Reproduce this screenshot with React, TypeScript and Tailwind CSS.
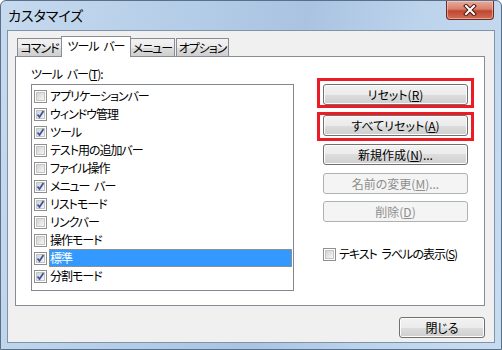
import type { ReactNode } from "react";

const font =
  "font-['Noto_Sans_CJK_JP','Liberation_Sans',sans-serif] [font-feature-settings:'palt'] [word-spacing:3px]";

const items = [
  { label: "アプリケーションバー", checked: false },
  { label: "ウィンドウ管理", checked: true },
  { label: "ツール", checked: true },
  { label: "テスト用の追加バー", checked: false },
  { label: "ファイル操作", checked: false },
  { label: "メニュー バー", checked: true },
  { label: "リストモード", checked: true },
  { label: "リンクバー", checked: false },
  { label: "操作モード", checked: false },
  { label: "標準", checked: true, selected: true },
  { label: "分割モード", checked: true },
];

const tabBg =
  "border border-b-0 border-[#898c95] bg-[linear-gradient(#f2f2f2_0%,#ebebeb_50%,#dddddd_50%,#cfcfcf_100%)]";

function CheckBox({ checked }: { checked: boolean }) {
  return (
    <span className="flex h-[13px] w-[13px] shrink-0 items-center justify-center border border-[#8e8f8f] bg-white p-px">
      <span className="relative flex h-full w-full items-center justify-center border border-[#c4c4c4] bg-[linear-gradient(135deg,#d3d3d3,#f6f6f6)]">
        {checked && (
          <svg width="9" height="9" viewBox="0 0 9 9" className="absolute -left-px -top-px">
            <path d="M1.5 4.5 L3.5 7 L7.5 1" fill="none" stroke="#3b58a0" strokeWidth="1.8" />
          </svg>
        )}
      </span>
    </span>
  );
}

function Button({
  children,
  disabled,
  className = "",
}: {
  children: ReactNode;
  disabled?: boolean;
  className?: string;
}) {
  return (
    <div
      className={`flex h-[21px] items-center justify-center whitespace-nowrap rounded-[3px] border text-[12px] ${
        disabled
          ? "border-[#adb2b5] bg-[#f4f4f4] text-[#8d8d8d]"
          : "border-[#707070] bg-[linear-gradient(#f2f2f2_0%,#ebebeb_50%,#dddddd_50%,#cfcfcf_100%)] text-black shadow-[inset_0_0_0_1px_#fcfcfc]"
      } ${className}`}
    >
      {children}
    </div>
  );
}

function RedBox({ children, top = 6, }: { children: ReactNode; top?: number }) {
  return (
    <div className="relative">
      <span
        className={`pointer-events-none absolute -left-[6px] -right-[6px] border-[3px] border-[#ed1c24] ${
          top === 6 ? "-top-[6px] -bottom-[3px]" : "-top-[3px] -bottom-[5px]"
        }`}
      />
      {children}
    </div>
  );
}

export default function App() {
  return (
    <div
      className={`flex h-[350px] w-[502px] flex-col overflow-hidden rounded-t-[6px] border border-[#5a6f88] bg-[linear-gradient(100deg,#c6daef_0%,#b3cce7_35%,#a9c3e1_55%,#bcd3ec_75%,#c8dcf0_100%)] text-black ${font}`}
    >
      <div className="flex h-[29px] shrink-0 items-start">
        <span className="pl-[7px] pt-[5px] text-[14px] leading-[18px] text-black">カスタマイズ</span>
        <div className="ml-auto mr-[7px] flex h-[19px] w-[48px] items-center justify-center rounded-b-[4px] border border-t-0 border-[#6d2c22] bg-[linear-gradient(#e8aa9d_0%,#d8806c_45%,#c0452f_55%,#cf6e58_100%)] shadow-[inset_0_0_0_1px_rgba(255,220,210,0.5)]">
          <svg width="14" height="12" viewBox="0 0 14 12">
            <path d="M3 2 L11 10 M11 2 L3 10" stroke="#4a1a12" strokeWidth="4" strokeLinecap="square" />
            <path d="M3 2 L11 10 M11 2 L3 10" stroke="#ffffff" strokeWidth="2" strokeLinecap="square" />
          </svg>
        </div>
      </div>

      <div className="mx-[6px] flex h-[313px] flex-col border border-[#8193a8] bg-[#f0f0f0] pl-[7px] pr-[9px]">
        <div className="mt-[5px] flex h-[20px] items-end whitespace-nowrap pl-[2px] text-[12px] tracking-[-1px]">
          <div className={`flex h-[18px] w-[45px] items-center justify-center ${tabBg}`}>コマンド</div>
          <div className="relative z-10 -mb-px -ml-px flex h-[21px] w-[70px] items-center justify-center border border-b-0 border-[#898c95] bg-white pb-[2px]">
            ツール バー
          </div>
          <div className={`-ml-px flex h-[18px] w-[45px] items-center justify-center ${tabBg}`}>メニュー</div>
          <div className={`ml-px flex h-[18px] w-[53px] items-center justify-center ${tabBg}`}>オプション</div>
        </div>

        <div className="flex h-[250px] border border-[#898c95] bg-white pl-[15px] pt-[8px] text-[12px]">
          <div className="flex flex-col">
            <div className="h-[19px] leading-[17px] tracking-[-1px]">
              ツール バー(<span className="underline">T</span>):
            </div>
            <div className="flex h-[207px] w-[263px] flex-col border border-[#828790] bg-white px-px pt-[2px] tracking-[-1px]">
              {items.map((it) => (
                <div key={it.label} className="flex h-[18px] items-center pl-px">
                  <CheckBox checked={it.checked} />
                  <span
                    className={`ml-[2px] flex h-[18px] items-center whitespace-pre ${
                      it.selected
                        ? "flex-1 border border-dotted border-[#d98a2b] bg-[#3399ff] text-white"
                        : "border border-transparent"
                    }`}
                  >
                    {it.label}
                  </span>
                </div>
              ))}
            </div>
          </div>

          <div className="ml-[29px] flex w-[145px] flex-col pt-[19px]">
            <RedBox>
              <Button>
                リセット(<span className="underline">R</span>)
              </Button>
            </RedBox>
            <div className="mt-[10px]">
              <RedBox top={3}>
                <Button>
                  すべてリセット(<span className="underline">A</span>)
                </Button>
              </RedBox>
            </div>
            <Button className="mt-[8px]">
              新規作成(<span className="underline">N</span>)...
            </Button>
            <Button disabled className="mt-[8px]">
              名前の変更(<span className="underline">M</span>)...
            </Button>
            <Button disabled className="mt-[7px]">
              削除(<span className="underline">D</span>)
            </Button>
            <div className="mt-[23px] flex items-center gap-[3px] whitespace-nowrap tracking-[-1px]">
              <CheckBox checked={false} />
              <span>
                テキスト ラベルの表示(<span className="underline">S</span>)
              </span>
            </div>
          </div>
        </div>

        <div className="flex justify-end pt-[11px]">
          <Button className="w-[86px]">閉じる</Button>
        </div>
      </div>
    </div>
  );
}
